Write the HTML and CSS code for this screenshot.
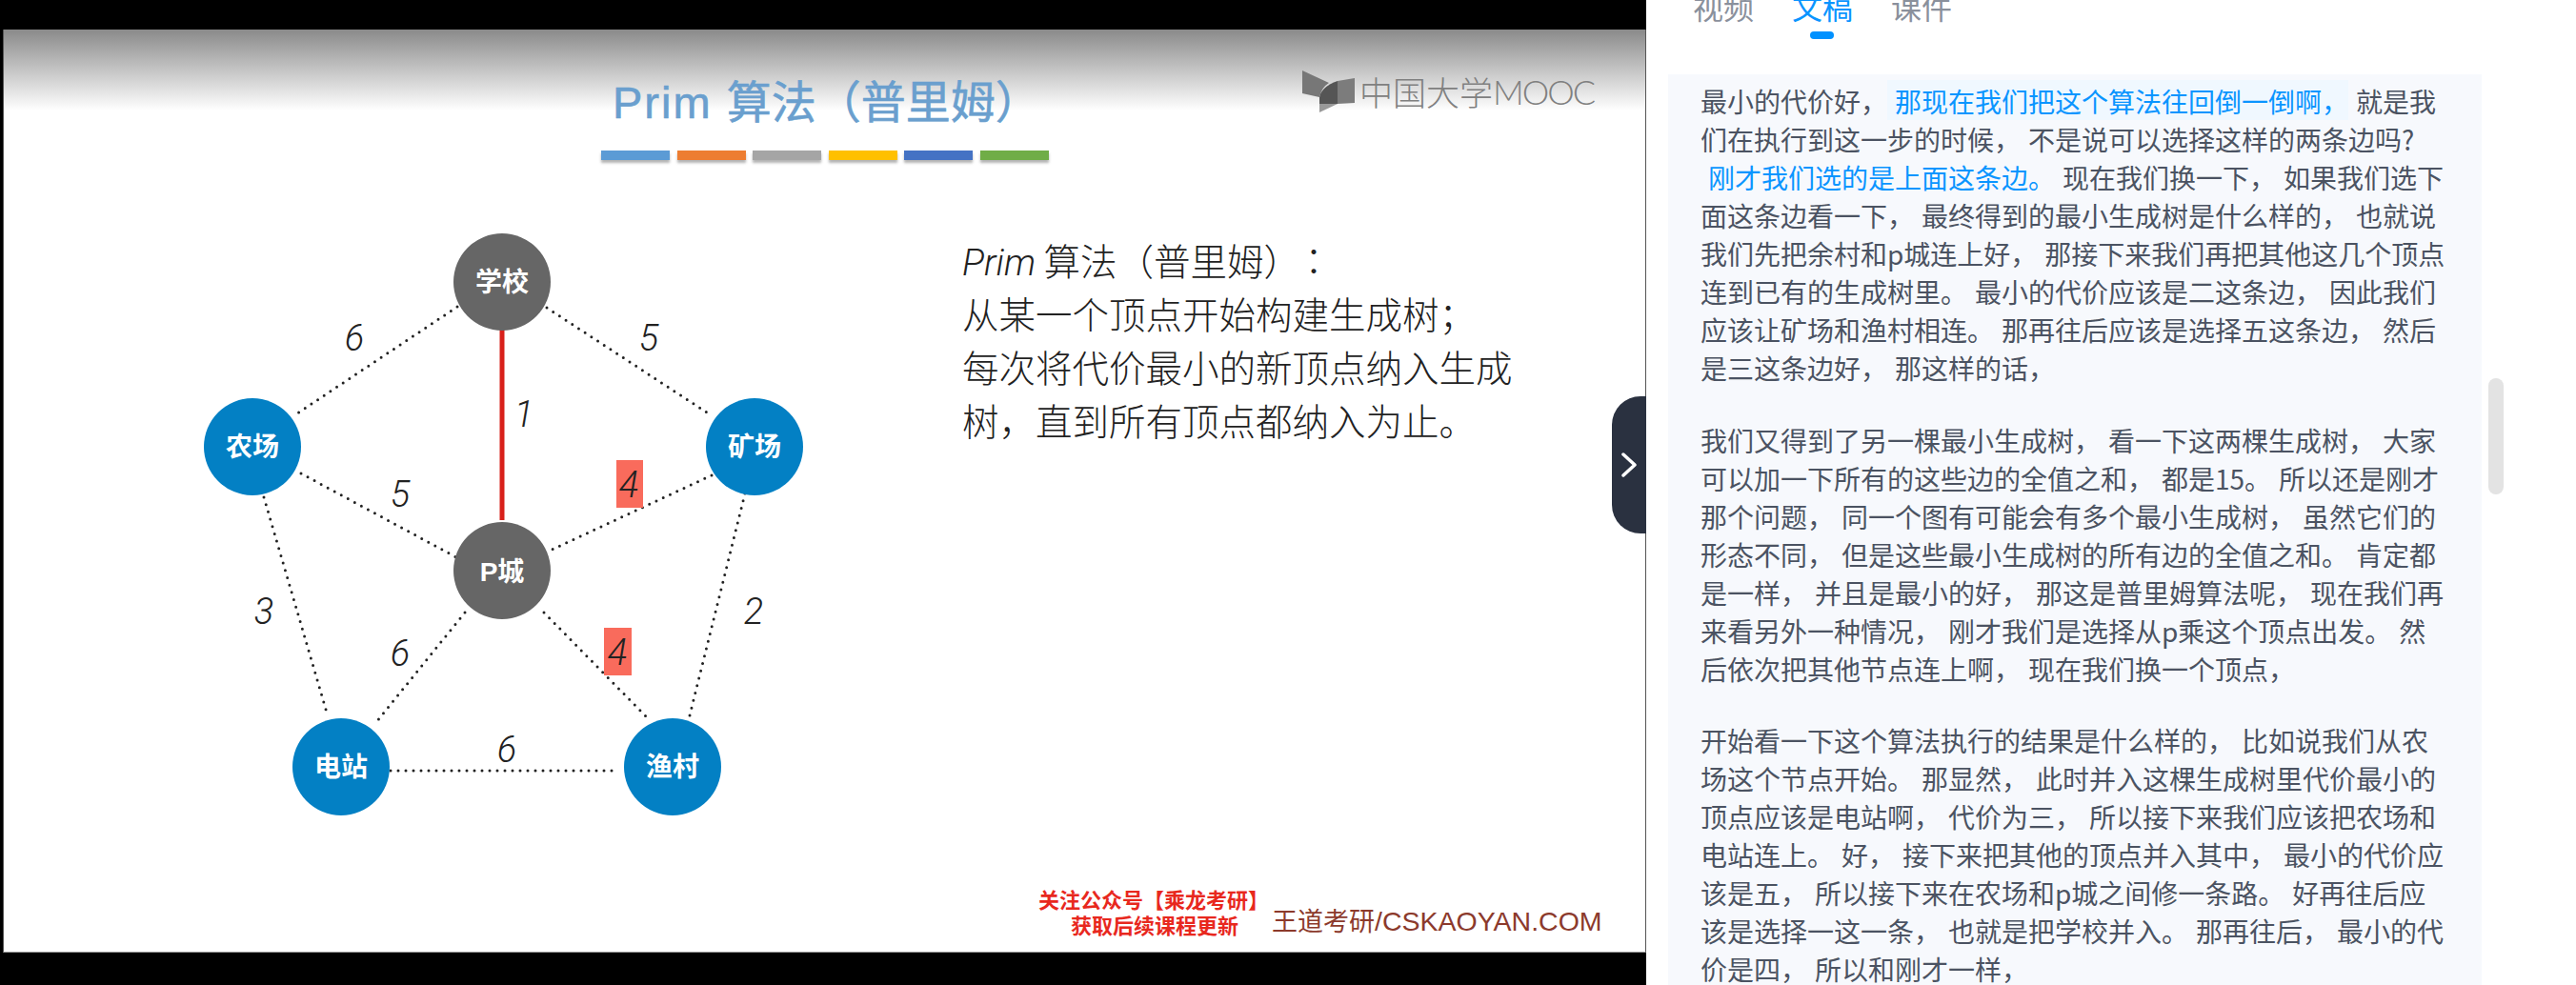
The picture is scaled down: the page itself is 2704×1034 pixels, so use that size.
FILE: index.html
```html
<!DOCTYPE html>
<html>
<head>
<meta charset="UTF-8">
<title>Prim 算法（普里姆）</title>
<link rel="stylesheet" href="styles.css">
</head>
<body>

<div id="player">
  <div class="slide">
    <div class="slide-head">
      <h1 class="slide-title"><span class="title-en">Prim </span>算法（普里姆）</h1>
      <div class="title-bars">
        <span class="bar bar-1"></span>
        <span class="bar bar-2"></span>
        <span class="bar bar-3"></span>
        <span class="bar bar-4"></span>
        <span class="bar bar-5"></span>
        <span class="bar bar-6"></span>
      </div>
    </div>

    <div class="logo">
      <svg class="logo-mark" viewBox="0 0 55 44" width="55" height="44">
        <path d="M0 0 L28 13 Q20 18 18 28 L0 24 Z" fill="#777"/>
        <path d="M37 11 L55 8 L55 34 L37 35 Z" fill="#7c7c7c"/>
        <path d="M18 28 Q20 17 37 11 L37 35 L18 35 Z" fill="#555"/>
        <path d="M18 35 L37 35 L18 44 Z" fill="#999"/>
      </svg>
      <span class="logo-cn">中国大学</span><span class="logo-en">MOOC</span>
    </div>

    <div class="slide-main">
      <svg class="graph" viewBox="200 240 660 620" width="660" height="620">
        <g class="edges">
          <line x1="480" y1="322" x2="312" y2="434"/>
          <line x1="574" y1="323" x2="745" y2="435"/>
          <line x1="316" y1="497" x2="479" y2="585"/>
          <line x1="747" y1="499" x2="577" y2="578"/>
          <line x1="277" y1="522" x2="343" y2="748"/>
          <line x1="782" y1="518" x2="723" y2="755"/>
          <line x1="488" y1="643" x2="395" y2="758"/>
          <line x1="571" y1="643" x2="680" y2="754"/>
          <line x1="410" y1="809" x2="646" y2="809"/>
        </g>
        <line class="edge-picked" x1="527" y1="346" x2="527" y2="546"/>

        <rect class="weight-box" x="647" y="483" width="28" height="50"/>
        <rect class="weight-box" x="634" y="659" width="29" height="50"/>

        <circle class="node-gray" cx="527" cy="296" r="51"/>
        <circle class="node-gray" cx="527" cy="599" r="51"/>
        <circle class="node-blue" cx="265" cy="469" r="51"/>
        <circle class="node-blue" cx="792" cy="469" r="51"/>
        <circle class="node-blue" cx="358" cy="805" r="51"/>
        <circle class="node-blue" cx="706" cy="805" r="51"/>

        <text class="node-label" x="527" y="306">学校</text>
        <text class="node-label" x="527" y="610">P城</text>
        <text class="node-label" x="265" y="479">农场</text>
        <text class="node-label" x="792" y="479">矿场</text>
        <text class="node-label" x="358" y="815">电站</text>
        <text class="node-label" x="706" y="815">渔村</text>

        <text class="weight" x="372" y="368">6</text>
        <text class="weight" x="681" y="368">5</text>
        <text class="weight" x="550" y="448">1</text>
        <text class="weight" x="420" y="532">5</text>
        <text class="weight" x="660" y="522">4</text>
        <text class="weight" x="277" y="655">3</text>
        <text class="weight" x="791" y="655">2</text>
        <text class="weight" x="420" y="699">6</text>
        <text class="weight" x="648" y="698">4</text>
        <text class="weight" x="532" y="800">6</text>
      </svg>

      <div class="slide-text">
        <p><i>Prim</i> 算法（普里姆）<span class="colon">：</span></p>
        <p>从某一个顶点开始构建生成树；</p>
        <p>每次将代价最小的新顶点纳入生成</p>
        <p>树，直到所有顶点都纳入为止。</p>
      </div>
    </div>

    <div class="slide-foot">
      <div class="promo">
        <div>关注公众号【乘龙考研】</div>
        <div>获取后续课程更新</div>
      </div>
      <div class="brand">王道考研<span class="brand-en">/CSKAOYAN.COM</span></div>
    </div>
  </div>

  <div class="collapse-btn">
    <svg viewBox="0 0 16 28" width="16" height="28">
      <path d="M2 3 L14 14 L2 25" fill="none" stroke="#fff" stroke-width="3.5" stroke-linecap="round" stroke-linejoin="round"/>
    </svg>
  </div>
</div>

<div id="sidebar">
  <div class="tabs">
    <a class="tab">视频</a>
    <a class="tab active">文稿</a>
    <a class="tab">课件</a>
  </div>

  <div class="transcript">
    <p>最小的代价好，<span class="now">那现在我们把这个算法往回倒一倒啊，</span> 就是我<br>
    们在执行到这一步的时候， 不是说可以选择这样的两条边吗?<br>
    <span class="next">刚才我们选的是上面这条边。</span> 现在我们换一下， 如果我们选下<br>
    面这条边看一下， 最终得到的最小生成树是什么样的， 也就说<br>
    我们先把余村和p城连上好， 那接下来我们再把其他这几个顶点<br>
    连到已有的生成树里。 最小的代价应该是二这条边， 因此我们<br>
    应该让矿场和渔村相连。 那再往后应该是选择五这条边， 然后<br>
    是三这条边好， 那这样的话，</p>

    <p>我们又得到了另一棵最小生成树， 看一下这两棵生成树， 大家<br>
    可以加一下所有的这些边的全值之和， 都是15。 所以还是刚才<br>
    那个问题， 同一个图有可能会有多个最小生成树， 虽然它们的<br>
    形态不同， 但是这些最小生成树的所有边的全值之和。 肯定都<br>
    是一样， 并且是最小的好， 那这是普里姆算法呢， 现在我们再<br>
    来看另外一种情况， 刚才我们是选择从p乘这个顶点出发。 然<br>
    后依次把其他节点连上啊， 现在我们换一个顶点，</p>

    <p>开始看一下这个算法执行的结果是什么样的， 比如说我们从农<br>
    场这个节点开始。 那显然， 此时并入这棵生成树里代价最小的<br>
    顶点应该是电站啊， 代价为三， 所以接下来我们应该把农场和<br>
    电站连上。 好， 接下来把其他的顶点并入其中， 最小的代价应<br>
    该是五， 所以接下来在农场和p城之间修一条路。 好再往后应<br>
    该是选择一这一条， 也就是把学校并入。 那再往后， 最小的代<br>
    价是四， 所以和刚才一样，</p>
  </div>

  <div class="scroll-thumb"></div>
</div>

</body>
</html>
```

FILE: styles.css
```css
html, body {
  margin:0;
  height:100%;
  overflow:hidden;
}

body {
  display:flex;
  background:#fff;
  font-family:"Noto Sans CJK SC", sans-serif;
}

/* left: the video */
#player {
  position:relative;
  width:1728px;
  height:1034px;
  flex-shrink:0;
  box-sizing:border-box;
  padding:31px 0 34px 3px;
  background:#000;
}

.slide {
  position:relative;
  height:100%;
  box-sizing:border-box;
  border-left:1px solid #555;
  border-right:1px solid #555;
  border-bottom:1px solid #999;
  background:linear-gradient(#8a8a8a 0, #fff 85px);
  overflow:hidden;
}

.slide-head {
  height:209px;
  padding:46px 0 0 627px;
  box-sizing:border-box;
}

.slide-title {
  margin:0;
  padding-left:12px;
  font-size:47px;
  line-height:62px;
  font-weight:400;
  color:#6a9fce;
  white-space:nowrap;
  font-family:"Liberation Sans", "Noto Sans CJK SC", sans-serif;
  -webkit-text-stroke:0.6px #6a9fce;
}
.title-en {
  letter-spacing:2px;
}

.title-bars {
  display:flex;
  gap:7.5px;
  margin-top:19px;
}

.bar {
  width:72px;
  height:10px;
  box-shadow:0 3px 3px rgba(0,0,0,0.3);
}
.bar-1 { background:#5b9bd5; }
.bar-2 { background:#ed7d31; }
.bar-3 { background:#a5a5a5; }
.bar-4 { background:#ffc000; }
.bar-5 { background:#4472c4; }
.bar-6 { background:#70ad47; }

.logo {
  position:absolute;
  left:1363px;
  top:43px;
  display:flex;
  align-items:center;
  color:#808080;
  white-space:nowrap;
}
.logo-mark {
  margin-right:5px;
}
.logo-cn {
  font-size:35px;
  line-height:44px;
  font-weight:300;
}
.logo-en {
  font-size:36px;
  line-height:44px;
  font-family:Lato, sans-serif;
  font-weight:300;
  letter-spacing:-2px;
}

.slide-main {
  display:flex;
  height:620px;
}

.graph {
  flex-shrink:0;
  margin-left:196px;
}

.edges line {
  stroke:#222;
  stroke-width:3;
  stroke-linecap:round;
  stroke-dasharray:0 8;
}

.edge-picked {
  stroke:#d8201a;
  stroke-width:5;
}

.weight-box {
  fill:#f96b5c;
}

.node-gray { fill:#666; }
.node-blue { fill:#0380c4; }

.node-label {
  fill:#fff;
  font-size:28px;
  font-weight:700;
  text-anchor:middle;
  font-family:"Liberation Sans", "Noto Sans CJK SC", sans-serif;
}

.weight {
  fill:#222;
  font-size:38px;
  font-style:italic;
  font-weight:300;
  text-anchor:middle;
  font-family:Roboto, sans-serif;
}

.slide-text {
  margin-left:150px;
  padding-top:4px;
  font-size:38.5px;
  line-height:56px;
  font-weight:300;
  color:#222;
  white-space:nowrap;
}
.slide-text p {
  margin:0;
}
.slide-text i {
  font-family:Roboto, sans-serif;
  font-weight:300;
  line-height:1;
}
.colon {
  margin-left:14px;
  font-family:"Noto Sans CJK TC", sans-serif;
  line-height:1;
}

.slide-foot {
  display:flex;
  align-items:flex-end;
  padding:70px 0 0 1086px;
  white-space:nowrap;
}

.promo {
  width:245px;
  color:#e8281e;
  font-size:22px;
  line-height:27px;
  font-weight:700;
}
.promo div + div {
  padding-left:34px;
}

.brand {
  color:#8c3a2c;
  font-size:27px;
  line-height:34px;
  font-family:"Noto Sans CJK SC", sans-serif;
}
.brand-en {
  font-size:28.5px;
  font-family:"Liberation Sans", sans-serif;
}

.collapse-btn {
  position:absolute;
  right:0;
  top:416px;
  width:36px;
  height:144px;
  display:flex;
  align-items:center;
  justify-content:center;
  background:#2a3140;
  border-radius:30px 0 0 30px;
}

/* right: tabs and transcript */
#sidebar {
  position:relative;
  flex:1;
  height:1034px;
  overflow:hidden;
}

.tabs {
  display:flex;
  gap:40px;
  height:92px;
  margin-top:-14px;
  padding-left:49px;
  box-sizing:border-box;
}

.tab {
  position:relative;
  font-size:32px;
  line-height:40px;
  height:40px;
  color:#8a909c;
}

.tab.active {
  color:#0a95ff;
}
.tab.active:after {
  content:"";
  position:absolute;
  left:19px;
  top:47px;
  width:25px;
  height:8px;
  border-radius:4px;
  background:#0091ff;
}

.transcript {
  width:854px;
  height:956px;
  margin-left:23px;
  padding:8px 0 0 34px;
  box-sizing:border-box;
  background:#f7f9fd;
  color:#4b5362;
  font-size:28px;
  line-height:40px;
  word-spacing:1.7px;
  white-space:nowrap;
}

.transcript p {
  margin:0 0 35.5px;
}

.now {
  display:inline-block;
  padding:2px 0 0 8px;
  margin-top:-2px;
  background:#f0f8ff;
  color:#0a95ff;
}

.next {
  padding-left:8px;
  color:#0a95ff;
}

.scroll-thumb {
  position:absolute;
  left:884px;
  top:397px;
  width:16px;
  height:122px;
  border-radius:8px;
  background:#e3e3e3;
}
```
